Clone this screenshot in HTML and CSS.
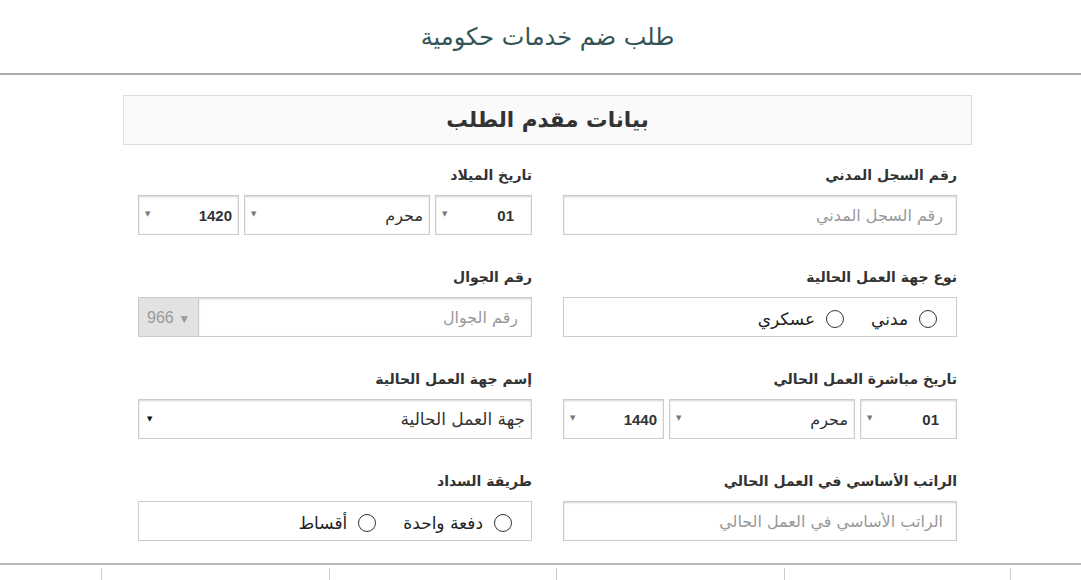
FILE: index.html
```html
<!DOCTYPE html>
<html lang="ar" dir="rtl">
<head>
    <meta charset="UTF-8">
    <meta name="viewport" content="width=device-width, initial-scale=1.0">

    <link rel="stylesheet" href="styles.css">

    <title>طلب ضم خدمات حكومية</title>
</head>
<body>
    <div class="cabecalho">
        <h1 class="titulo">طلب ضم خدمات حكومية</h1>
    </div>

    <div class="pagina">
        <div class="painel">
            <div class="painel-titulo">بيانات مقدم الطلب</div>

            <form class="formulario">
                <div class="campo">
                    <label>رقم السجل المدني</label>
                    <input type="text" class="caixa" placeholder="رقم السجل المدني">
                </div>

                <div class="campo">
                    <label>تاريخ الميلاد</label>
                    <div class="datas">
                        <div class="lista dia"><select class="caixa numero"><option>01</option></select></div>
                        <div class="lista mes"><select class="caixa"><option>محرم</option></select></div>
                        <div class="lista ano"><select class="caixa numero"><option>1420</option></select></div>
                    </div>
                </div>

                <div class="campo">
                    <label>نوع جهة العمل الحالية</label>
                    <div class="opcoes">
                        <label class="opcao"><input type="radio" name="tipo"> مدني</label>
                        <label class="opcao"><input type="radio" name="tipo"> عسكري</label>
                    </div>
                </div>

                <div class="campo">
                    <label>رقم الجوال</label>
                    <div class="telefone">
                        <input type="text" class="caixa" placeholder="رقم الجوال">
                        <span class="codigo">966 <span class="seta-codigo">&#9660;</span></span>
                    </div>
                </div>

                <div class="campo">
                    <label>تاريخ مباشرة العمل الحالي</label>
                    <div class="datas">
                        <div class="lista dia"><select class="caixa numero"><option>01</option></select></div>
                        <div class="lista mes"><select class="caixa"><option>محرم</option></select></div>
                        <div class="lista ano"><select class="caixa numero"><option>1440</option></select></div>
                    </div>
                </div>

                <div class="campo">
                    <label>إسم جهة العمل الحالية</label>
                    <div class="lista escura"><select class="caixa entidade"><option>جهة العمل الحالية</option></select></div>
                </div>

                <div class="campo">
                    <label>الراتب الأساسي في العمل الحالي</label>
                    <input type="text" class="caixa" placeholder="الراتب الأساسي في العمل الحالي">
                </div>

                <div class="campo">
                    <label>طريقة السداد</label>
                    <div class="opcoes">
                        <label class="opcao"><input type="radio" name="sadad"> دفعة واحدة</label>
                        <label class="opcao"><input type="radio" name="sadad"> أقساط</label>
                    </div>
                </div>
            </form>
        </div>
    </div>

    <div class="rodape">
        <div class="colunas">
            <span></span><span></span><span></span><span></span>
        </div>
    </div>
</body>
</html>
```

FILE: styles.css
```css
body {
    margin: 0;
    background-color: white;
    font-family: "DejaVu Sans", sans-serif;
    color: #333;
}

.cabecalho {
    height: 73px;
    border-bottom: 2px solid #aaa;
    padding-left: 14px;
}

.titulo {
    margin: 0;
    text-align: center;
    line-height: 74px;
    font-size: 24px;
    font-weight: normal;
    color: #335456;
}

.pagina {
    padding-left: 14px;
}

.painel {
    width: 849px;
    margin: 20px auto 0;
}

.painel-titulo {
    height: 48px;
    line-height: 48px;
    border: 1px solid #ddd;
    background-color: #fafafa;
    text-align: center;
    font-size: 21.5px;
    font-weight: bold;
    color: #333;
}

.formulario {
    display: grid;
    grid-template-columns: 394px 394px;
    column-gap: 31px;
    row-gap: 31px;
    padding: 19px 15px 0;
}

.campo > label {
    display: block;
    font-size: 14px;
    font-weight: bold;
    line-height: 22px;
    margin-bottom: 9px;
    color: #333;
}

.caixa {
    display: block;
    box-sizing: border-box;
    width: 100%;
    height: 40px;
    margin: 0;
    padding: 0 13px;
    border: 1px solid #ccc;
    border-radius: 0;
    box-shadow: inset 0 1px 2px rgba(0, 0, 0, 0.18);
    background-color: white;
    font-family: "DejaVu Sans", sans-serif;
    font-size: 16px;
    color: #555;
    direction: rtl;
}

.caixa::placeholder {
    color: #999;
}

select.caixa {
    appearance: none;
    -webkit-appearance: none;
    padding: 0 6px 0 20px;
    color: #333;
}

.numero {
    font-family: "Liberation Sans", sans-serif;
    font-weight: bold;
    font-size: 15px;
}

.dia .numero {
    padding-right: 17px;
}

.entidade {
    padding-right: 9px;
    font-size: 17px;
}

.lista {
    position: relative;
}

.lista::after {
    content: "\25BC";
    position: absolute;
    left: 7px;
    top: 15px;
    font-size: 7px;
    color: #777;
    pointer-events: none;
}

.escura::after {
    left: 9px;
    top: 16px;
    color: #111;
}

.datas {
    display: flex;
    gap: 5px;
}

.dia {
    width: 97px;
}

.mes {
    width: 186px;
}

.ano {
    width: 101px;
}

.opcoes {
    display: flex;
    align-items: center;
    gap: 27px;
    box-sizing: border-box;
    height: 40px;
    padding: 3px 19px 0;
    border: 1px solid #ccc;
}

.opcao {
    display: flex;
    align-items: center;
    gap: 11px;
    font-size: 17px;
    color: #222;
}

.opcao input {
    appearance: none;
    -webkit-appearance: none;
    width: 18px;
    height: 18px;
    margin: 0;
    border: 1.5px solid #333;
    border-radius: 50%;
    background-color: white;
}

.telefone {
    display: flex;
}

.telefone .caixa {
    flex: 1;
}

.codigo {
    width: 60px;
    height: 40px;
    line-height: 40px;
    background-color: #e2e2e2;
    border: 1px solid #ccc;
    border-right: none;
    box-sizing: border-box;
    direction: ltr;
    padding-left: 8px;
    font-family: "Liberation Sans", sans-serif;
    font-size: 16px;
    color: #999;
}

.seta-codigo {
    font-size: 12px;
    color: #999;
}

.rodape {
    margin-top: 22px;
    border-top: 2px solid #b8b8b8;
    direction: ltr;
}

.colunas {
    display: grid;
    grid-template-columns: repeat(4, 227.5px);
    padding-left: 101px;
    padding-top: 3px;
    height: 20px;
}

.colunas span {
    border-left: 1px solid #ccc;
}

.colunas span:last-child {
    border-right: 1px solid #ccc;
}
```
